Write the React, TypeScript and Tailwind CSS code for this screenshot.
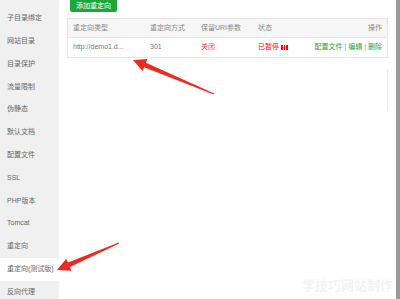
import React from 'react';

const menuItems = [
    '子目录绑定',
    '网站目录',
    '目录保护',
    '流量限制',
    '伪静态',
    '默认文档',
    '配置文件',
    'SSL',
    'PHP版本',
    'Tomcat',
    '重定向',
    '重定向(测试版)',
    '反向代理',
];

const Arrow = ({ x1, y1, x2, y2 }: { x1: number; y1: number; x2: number; y2: number }) => {
    // tapered shaft from tail (x1,y1) to head (x2,y2)
    const dx = x2 - x1;
    const dy = y2 - y1;
    const len = Math.hypot(dx, dy);
    const ux = dx / len;
    const uy = dy / len;
    const nx = -uy;
    const ny = ux;
    const headLen = 13;
    const headW = 6.5;
    const bx = x2 - ux * headLen;
    const by = y2 - uy * headLen;
    const tail = 0.6;
    const shaft = 2.4;
    const pts = [
        [x1 + nx * tail, y1 + ny * tail],
        [bx + nx * shaft, by + ny * shaft],
        [bx + nx * headW, by + ny * headW],
        [x2, y2],
        [bx - nx * headW, by - ny * headW],
        [bx - nx * shaft, by - ny * shaft],
        [x1 - nx * tail, y1 - ny * tail],
    ]
        .map((p) => p.join(','))
        .join(' ');
    return <polygon points={pts} fill="#ec2a1f" />;
};

export default function App() {
    return (
        <div
            className="relative w-[400px] h-[299px] overflow-hidden bg-white flex"
            style={{ fontFamily: '"Liberation Sans", "Noto Sans CJK SC", sans-serif' }}
        >
            <div className="w-[59px] h-full bg-[#f0f0f0] pt-[7px] shrink-0">
                {menuItems.map((item) => (
                    <div
                        key={item}
                        className={`h-[22.8px] flex items-center pl-[7px] text-[7px] text-[#666] whitespace-nowrap ${item === '重定向(测试版)' ? 'bg-white' : ''}`}
                    >
                        {item}
                    </div>
                ))}
            </div>

            <div className="flex-1 px-[8px]">
                <button className="ml-[3px] h-[12px] px-[6px] bg-[#20a53a] text-white text-[7px] rounded-b-[2px] flex items-center">
                    添加重定向
                </button>

                <div className="mt-[6px] border border-[#e6e6e6] text-[7px]">
                    <div className="h-[19px] bg-[#f6f6f6] border-b border-[#e6e6e6] flex items-center text-[#888] px-[5px]">
                        <span className="w-[77px]">重定向类型</span>
                        <span className="w-[51px]">重定向方式</span>
                        <span className="w-[57px]">保留URI参数</span>
                        <span className="flex-1">状态</span>
                        <span>操作</span>
                    </div>
                    <div className="h-[19px] flex items-center text-[#777] px-[5px]">
                        <span className="w-[77px]">http://demo1.d...</span>
                        <span className="w-[51px]">301</span>
                        <span className="w-[57px] text-[#f33]">关闭</span>
                        <span className="flex-1 text-[#f00] flex items-center">
                            已暂停
                            <span className="ml-[2px] flex gap-[1px]">
                                <span className="w-[1.5px] h-[5px] bg-[#f00]" />
                                <span className="w-[1.5px] h-[5px] bg-[#f00]" />
                                <span className="w-[1.5px] h-[5px] bg-[#f00]" />
                            </span>
                        </span>
                        <span className="text-[#20a53a]">
                            配置文件 <span className="text-[#999]">|</span> 编辑 <span className="text-[#999]">|</span> 删除
                        </span>
                    </div>
                </div>

                <div className="mt-[11px] h-[42px] border-r border-[#ececec]" />
            </div>

            <div className="w-[4px] h-full bg-[#9a9a9a] shrink-0" />

            {/* annotation overlay */}
            <svg className="absolute inset-0 pointer-events-none" width="400" height="299">
                <Arrow x1={214} y1={94} x2={133} y2={60} />
                <Arrow x1={119} y1={243} x2={57} y2={270} />
            </svg>

            <div className="absolute right-[7px] bottom-[4px] text-[13px] font-bold text-[#f3f3f3] pointer-events-none">
                学技巧网站制作
            </div>
        </div>
    );
}
